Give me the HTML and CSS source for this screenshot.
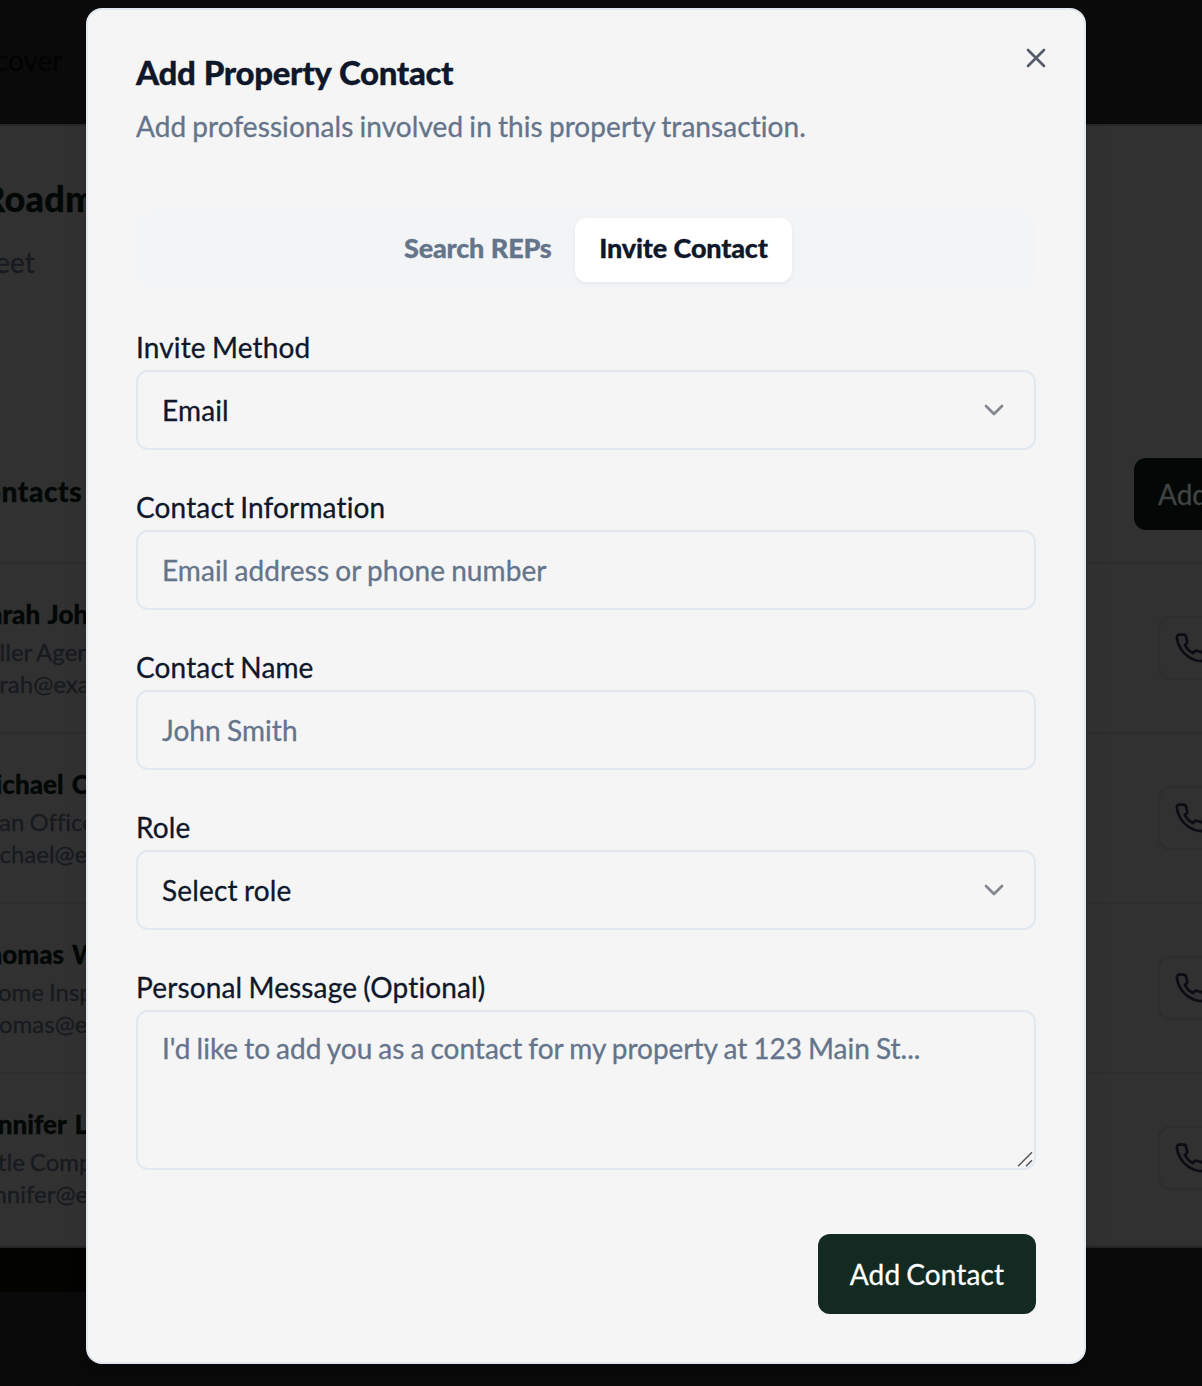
FILE: index.html
```html
<!DOCTYPE html>
<html lang="en">
<head>
<meta charset="utf-8">
<title>Add Property Contact</title>
<link rel="stylesheet" href="styles.css">
</head>
<body>
<svg class="defs" aria-hidden="true">
  <symbol id="phone" viewBox="0 0 24 24"><path d="M22 16.92v3a2 2 0 0 1-2.18 2 19.79 19.79 0 0 1-8.63-3.07 19.5 19.5 0 0 1-6-6 19.79 19.79 0 0 1-3.07-8.67A2 2 0 0 1 4.11 2h3a2 2 0 0 1 2 1.72 12.84 12.84 0 0 0 .7 2.81 2 2 0 0 1-.45 2.11L8.09 9.91a16 16 0 0 0 6 6l1.27-1.27a2 2 0 0 1 2.11-.45 12.84 12.84 0 0 0 2.81.7A2 2 0 0 1 22 16.92z"/></symbol>
  <symbol id="chevron" viewBox="0 0 24 24"><path d="m6 9 6 6 6-6"/></symbol>
</svg>
<div class="page">
  <header class="topbar"><span class="nav-item">Discover</span></header>
  <main class="sheet">
    <div class="intro">
      <h1 class="page-title"><span>Roadm</span></h1>
      <p class="page-sub">Street</p>
    </div>
    <div class="list-head">
      <h2 class="list-title">Contacts</h2>
      <div class="add-small">Add</div>
    </div>
    <div class="row">
      <div class="person"><b class="name n1">Sarah Joh</b><span class="meta r1">Seller Agen</span><span class="meta e1">sarah@exa</span></div>
      <div class="call"><svg class="call-icon"><use href="#phone"/></svg></div>
    </div>
    <div class="row">
      <div class="person"><b class="name n2">Michael C</b><span class="meta r2">Loan Office</span><span class="meta e2">michael@e</span></div>
      <div class="call"><svg class="call-icon"><use href="#phone"/></svg></div>
    </div>
    <div class="row">
      <div class="person"><b class="name n3">Thomas W</b><span class="meta r3">Home Insp</span><span class="meta e3">thomas@ex</span></div>
      <div class="call"><svg class="call-icon"><use href="#phone"/></svg></div>
    </div>
    <div class="row">
      <div class="person"><b class="name n4">Jennifer L</b><span class="meta r4">Title Comp</span><span class="meta e4">jennifer@e</span></div>
      <div class="call"><svg class="call-icon"><use href="#phone"/></svg></div>
    </div>
  </main>
  <div class="photo"></div>
</div>

<div class="overlay">
  <section class="dialog" role="dialog" aria-labelledby="title">
    <h2 class="title" id="title"><span>Add Property Contact</span></h2>
    <p class="desc">Add professionals involved in this property transaction.</p>
    <div class="tabs">
      <button class="tab t-search"><span>Search REPs</span></button>
      <button class="tab active"><span>Invite Contact</span></button>
    </div>
    <div class="field">
      <label class="label">Invite Method</label>
      <div class="control select"><span>Email</span><svg class="chevron"><use href="#chevron"/></svg></div>
    </div>
    <div class="field">
      <label class="label" for="info">Contact Information</label>
      <input class="control" id="info" placeholder="Email address or phone number">
    </div>
    <div class="field">
      <label class="label" for="name">Contact Name</label>
      <input class="control" id="name" placeholder="John Smith">
    </div>
    <div class="field">
      <label class="label">Role</label>
      <div class="control select"><span>Select role</span><svg class="chevron"><use href="#chevron"/></svg></div>
    </div>
    <div class="field message">
      <label class="label" for="msg">Personal Message (Optional)</label>
      <textarea class="control area" id="msg" placeholder="I'd like to add you as a contact for my property at 123 Main St..."></textarea>
      <svg class="grip" viewBox="0 0 16 16"><path d="M1 15.300 15 1.300M9 15.300l6-6"/></svg>
    </div>
    <div class="actions"><button class="submit">Add Contact</button></div>
    <svg class="close" viewBox="0 0 24 24"><path d="M18 6 6 18M6 6l12 12"/></svg>
  </section>
</div>
</body>
</html>
```
FILE: styles.css
```css
* { box-sizing: border-box; }
body { margin: 0; height: 1386px; overflow: hidden; background: #0a0a0a; font: 28px/40px Lato, sans-serif; color: #0f172a; font-variant-ligatures: none; word-spacing: -1.1px; -webkit-text-stroke: .3px; }
h1, h2, p { margin: 0; }
button { border: 0; font: inherit; word-spacing: inherit; }
svg { fill: none; stroke: currentColor; stroke-width: 2; stroke-linecap: round; stroke-linejoin: round; }
.defs { display: none; }

.page { width: 1202px; height: 1386px; overflow: hidden; white-space: nowrap; color: #171a1f; }
.topbar { height: 124px; padding-top: 40px; color: #030303; }
.nav-item { display: block; margin-left: -45px; }
.sheet { height: 1124px; border-top: 2px solid #282828; border-bottom: 2px solid #242626; background: #313131; }
.intro { height: 294px; padding-top: 52px; }
.page-title { margin-left: -18px; font-size: 36px; font-weight: 900; line-height: 40px; letter-spacing: .3px; color: #030807; }
.page-sub { margin: 24px 0 0 -39px; }
.list-head { display: flex; justify-content: space-between; height: 144px; padding-top: 38px; border-bottom: 2px solid #2d2d2e; }
.list-title { margin: -5px 0 0 -34px; font-size: 28px; font-weight: 900; line-height: 76px; letter-spacing: .6px; color: #030807; }
.add-small { width: 68px; height: 72px; padding-left: 24px; border-radius: 12px 0 0 12px; background: #030807; color: #424444; line-height: 72px; }
.row { display: flex; justify-content: space-between; align-items: center; height: 170px; border-bottom: 2px solid #2d2d2e; }
.row:last-child { border-color: transparent; }
.person { display: flex; flex-direction: column; font-size: 24px; line-height: 32px; }
.name { height: 40px; font-size: 26px; font-weight: 900; line-height: 36px; word-spacing: 2px; color: #030807; }
.n1 { margin-left: -25px; } .r1 { margin-left: -26px; } .e1 { margin-left: -23px; }
.n2 { margin-left: -29px; } .r2 { margin-left: -26px; } .e2 { margin-left: -26px; }
.n3 { margin-left: -28px; } .r3 { margin-left: -20px; } .e3 { margin-left: -23px; }
.n4 { margin-left: -27px; } .r4 { margin-left: -22px; } .e4 { margin-left: -25px; }
.call { display: grid; place-items: center; flex: none; width: 64px; height: 64px; margin-right: -20px; border: 2px solid #2d2d2e; border-radius: 12px; color: #0b0d13; }
.call-icon { width: 32px; height: 32px; }
.photo { width: 120px; height: 44px; background: #030300; }

.overlay { position: absolute; inset: 0; padding: 8px 0 0 86px; overflow: hidden; }
.dialog { position: relative; width: 1000px; height: 1356px; padding: 48px; border: 2px solid #e2e8f0; border-radius: 16px; background: #f5f5f5; box-shadow: 0 20px 30px -6px rgba(0,0,0,.1), 0 8px 12px -8px rgba(0,0,0,.1); }
.title { height: 48px; font-size: 33px; font-weight: 900; line-height: 28px; letter-spacing: -.35px; word-spacing: .8px; white-space: nowrap; }
.desc { height: 104px; color: #64748b; letter-spacing: .07px; }
.tabs { display: flex; justify-content: center; height: 80px; margin-bottom: 37px; padding: 8px; border-radius: 16px; background: #f3f4f6; }
.tab { padding: 0 24px 4px; border-radius: 12px; background: none; color: #64748b; font-size: 27px; font-weight: 900; line-height: 56px; letter-spacing: -.2px; word-spacing: .4px; white-space: nowrap; }
.t-search { width: 195px; }
.active { width: 217px; background: #fff; color: #0f172a; box-shadow: 0 2px 4px rgba(0,0,0,.05); }
.field { position: relative; height: 160px; }
.label { display: block; height: 43px; letter-spacing: .14px; }
.control { display: block; width: 100%; height: 80px; padding: 0 24px; border: 2px solid #e2e8f0; border-radius: 12px; background: transparent; color: #0f172a; font: 28px/40px Lato, sans-serif; font-variant-ligatures: none; letter-spacing: .08px; word-spacing: -1.1px; outline: 0; }
.control::placeholder { color: #64748b; opacity: 1; }
.select { display: flex; align-items: center; justify-content: space-between; letter-spacing: .17px; }
.chevron { width: 32px; height: 32px; color: #85878e; }
.message { height: 203px; }
.area { height: 160px; padding-top: 16px; letter-spacing: 0; resize: none; }
.grip { position: absolute; right: 3px; bottom: 3px; width: 16px; height: 16px; color: #555; stroke-width: 1.5; stroke-linecap: butt; }
.actions { display: flex; justify-content: flex-end; padding-top: 64px; }
.submit { width: 218px; height: 80px; padding: 0; border-radius: 12px; background: #132a22; color: #fff; line-height: 80px; letter-spacing: .1px; }
.close { position: absolute; top: 32px; right: 32px; width: 32px; height: 32px; color: #565b69; }
```
